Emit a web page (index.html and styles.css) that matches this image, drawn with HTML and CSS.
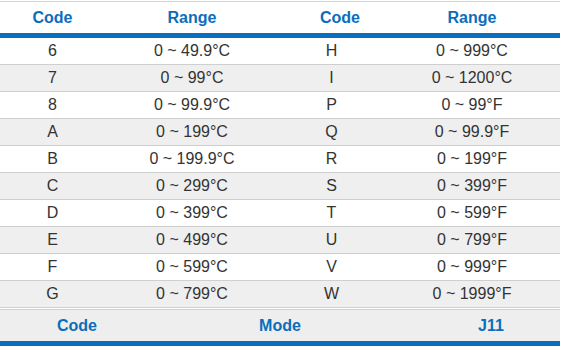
FILE: index.html
```html
<!DOCTYPE html>
<html>
<head>
<meta charset="utf-8">
<link rel="stylesheet" href="styles.css">
</head>
<body>
<div class="table">
  <div class="head row4">
    <div>Code</div><div>Range</div><div class="shift">Code</div><div>Range</div>
  </div>
  <div class="body">
    <div class="row row4"><div>6</div><div>0 ~ 49.9°C</div><div>H</div><div>0 ~ 999°C</div></div>
    <div class="row row4"><div>7</div><div>0 ~ 99°C</div><div>I</div><div>0 ~ 1200°C</div></div>
    <div class="row row4"><div>8</div><div>0 ~ 99.9°C</div><div>P</div><div>0 ~ 99°F</div></div>
    <div class="row row4"><div>A</div><div>0 ~ 199°C</div><div>Q</div><div>0 ~ 99.9°F</div></div>
    <div class="row row4"><div>B</div><div>0 ~ 199.9°C</div><div>R</div><div>0 ~ 199°F</div></div>
    <div class="row row4"><div>C</div><div>0 ~ 299°C</div><div>S</div><div>0 ~ 399°F</div></div>
    <div class="row row4"><div>D</div><div>0 ~ 399°C</div><div>T</div><div>0 ~ 599°F</div></div>
    <div class="row row4"><div>E</div><div>0 ~ 499°C</div><div>U</div><div>0 ~ 799°F</div></div>
    <div class="row row4"><div>F</div><div>0 ~ 599°C</div><div>V</div><div>0 ~ 999°F</div></div>
    <div class="row row4"><div>G</div><div>0 ~ 799°C</div><div>W</div><div>0 ~ 1999°F</div></div>
  </div>
  <div class="foot">
    <div>Code</div><div>Mode</div><div class="shift">J11</div>
  </div>
</div>
</body>
</html>
```
FILE: styles.css
```css
html, body {
  margin: 0;
  padding: 0;
  background: #fff;
}
body {
  font-family: "Liberation Sans", Arial, sans-serif;
  font-size: 16px;
  color: #333;
}
.table {
  width: 560px;
  margin-top: 1px;
  border-top: 1px solid #d4d4d4;
}
.row4 {
  display: grid;
  grid-template-columns: 105px 174px 105px 176px;
}
.row4 > div,
.foot > div {
  text-align: center;
}
.head {
  height: 31px;
  align-items: center;
  font-weight: bold;
  color: #0a6ebd;
  border-bottom: 5px solid #0a6ebd;
}
.head .shift {
  padding-left: 17px;
}
.row {
  height: 26px;
  align-items: center;
  border-bottom: 1px solid #cfcfcf;
}
.row:nth-child(even) {
  background: #efefef;
}
.body {
  border-bottom: 1px solid #fff;
}
.foot {
  display: grid;
  grid-template-columns: 154px 252px 154px;
  height: 31px;
  align-items: center;
  background: #eee;
  border-top: 1px solid #cfcfcf;
  border-bottom: 5px solid #0a6ebd;
  font-weight: bold;
  color: #0a6ebd;
}
.foot .shift {
  padding-left: 16px;
}
```
